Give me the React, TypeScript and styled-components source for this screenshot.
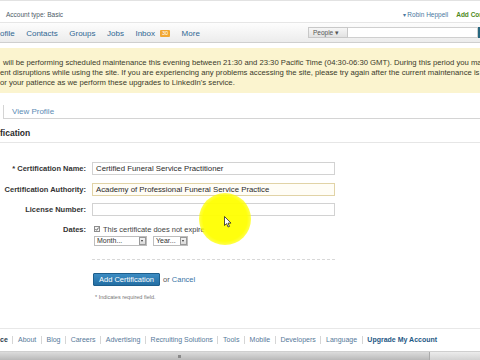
import React from 'react'
import styled, { createGlobalStyle, css } from 'styled-components'

const GlobalStyle = createGlobalStyle`
  html, body {
    margin: 0;
    padding: 0;
    background: #fff;
    overflow: hidden;
  }
  body {
    font-family: 'Liberation Sans', Arial, sans-serif;
    color: #333;
  }
`

const Page = styled.div`
  position: relative;
  width: 480px;
  height: 360px;
  overflow: hidden;
  display: flex;
  flex-direction: column;
  background: #fff;
`

// the browser window is scrolled a little, so both edges of the page are cut
const TopBar = styled.div`
  height: 22px;
  box-sizing: border-box;
  border-top: 1px solid #e2e2e2;
  display: flex;
  align-items: flex-end;
  padding: 0 0 4px 6px;
  margin-right: -30px;
  font-size: 6.5px;
  color: #4d5a66;
`

const Spacer = styled.div`
  flex: 1;
`

const UserName = styled.span`
  color: #4a78a0;
  margin-right: 8px;
  white-space: nowrap;
  &::before {
    content: '▾ ';
    font-size: 6px;
  }
`

const AddLink = styled.span`
  color: #4f8a1c;
  font-weight: bold;
  white-space: nowrap;
`

const NavBar = styled.div`
  height: 21px;
  box-sizing: border-box;
  display: flex;
  align-items: center;
  background: linear-gradient(#fdfdfd, #ececec);
  border-top: 1px solid #e6e6e6;
  border-bottom: 1px solid #cfcfcf;
`

const NavItems = styled.div`
  display: flex;
  align-items: center;
  gap: 11.5px;
  font-size: 8px;
  color: #2f6792;
  margin-top: 1px;
`

const Badge = styled.span`
  display: inline-block;
  background: #f2a831;
  color: #fff;
  font-size: 5.5px;
  line-height: 7px;
  padding: 0 2px;
  margin-left: 5px;
  border-radius: 1px;
  vertical-align: 1px;
`

const Search = styled.div`
  display: flex;
  align-items: stretch;
  height: 11px;
`

const SearchSelect = styled.div`
  width: 40px;
  box-sizing: border-box;
  border: 1px solid #c8c8c8;
  background: linear-gradient(#f6f6f6, #e2e2e2);
  font-size: 6.5px;
  color: #555;
  line-height: 9px;
  padding-left: 4px;
`

const SearchInput = styled.div`
  width: 130px;
  box-sizing: border-box;
  border: 1px solid #cfcfcf;
  border-left: none;
  background: #fff;
`

const SearchButton = styled.div`
  width: 2px;
  background: #27677f;
`

const Notice = styled.div`
  margin-top: 5px;
  height: 45px;
  box-sizing: border-box;
  background: #fbf4cf;
  padding-top: 10px;
  font-size: 7.7px;
  line-height: 10px;
  color: #3a3a2a;
  overflow: hidden;
`

const NoticeLine = styled.div<{ $indent?: number }>`
  white-space: nowrap;
  padding-left: ${p => p.$indent ?? 0}px;
`

const TabStrip = styled.div`
  margin-top: 12px;
  height: 14px;
  display: flex;
  align-items: stretch;
`

const ActiveTab = styled.div`
  width: 3px;
  border-right: 1px solid #d4d4d4;
`

const Tab = styled.div`
  flex: 1;
  border-bottom: 1px solid #d4d4d4;
  padding-left: 8px;
  font-size: 8px;
  color: #5c8cb5;
  line-height: 13px;
`

const SectionTitle = styled.div`
  height: 24px;
  box-sizing: border-box;
  border-bottom: 1px solid #e6e6e6;
  font-size: 8.5px;
  font-weight: bold;
  color: #2b2b2b;
  padding-top: 10px;
  line-height: 9px;
`

const Form = styled.div`
  margin-top: 19px;
  display: grid;
  grid-template-columns: 86px 243px;
  column-gap: 6px;
  row-gap: 7.5px;
  align-items: center;
`

const Label = styled.div<{ $top?: boolean }>`
  text-align: right;
  font-size: 7.5px;
  font-weight: bold;
  color: #333;
  white-space: nowrap;
  ${p =>
    p.$top &&
    css`
      align-self: start;
      margin-top: 1px;
    `}
`

const TextInput = styled.div<{ $focus?: boolean }>`
  height: 13px;
  box-sizing: border-box;
  border: 1px solid ${p => (p.$focus ? '#e1d3a6' : '#d2d2d2')};
  background: ${p => (p.$focus ? '#fffdf6' : '#fff')};
  font-size: 7.8px;
  line-height: 11px;
  padding-left: 3px;
  color: #2a2a2a;
  white-space: nowrap;
  overflow: hidden;
`

const Dates = styled.div`
  display: flex;
  flex-direction: column;
  gap: 2px;
  padding-left: 2px;
  margin-top: 1px;
`

const CheckRow = styled.div`
  display: flex;
  align-items: center;
  gap: 3px;
  font-size: 7.5px;
  color: #444;
  line-height: 9px;
`

const Selects = styled.div`
  display: flex;
  gap: 6px;
`

const Select = styled.div<{ $width: number }>`
  width: ${p => p.$width}px;
  height: 10px;
  box-sizing: border-box;
  border: 1px solid #bdbdbd;
  background: #fff;
  display: flex;
  align-items: center;
  justify-content: space-between;
  font-size: 7px;
  color: #333;
  padding-left: 2px;
`

const SelectArrow = styled.span`
  width: 7px;
  height: 8px;
  box-sizing: border-box;
  border: 1px solid #999;
  background: linear-gradient(#f4f4f4, #dadada);
  position: relative;
  &::after {
    content: '';
    position: absolute;
    left: 1px;
    top: 2.5px;
    border-left: 1.5px solid transparent;
    border-right: 1.5px solid transparent;
    border-top: 2px solid #333;
  }
`

const Divider = styled.div`
  margin: 13px 0 0 92px;
  width: 243px;
  border-top: 1px dashed #d8d8d8;
`

const Actions = styled.div`
  margin: 13px 0 0 93px;
  display: flex;
  align-items: center;
  gap: 3px;
  font-size: 7.5px;
  color: #555;
`

const PrimaryButton = styled.div`
  height: 13px;
  box-sizing: border-box;
  padding: 0 5px;
  background: linear-gradient(#3c8cc3, #236ea3);
  border: 1px solid #1d5e8c;
  color: #fff;
  font-size: 7.5px;
  line-height: 11px;
  border-radius: 1px;
`

const LinkText = styled.span`
  color: #3974a6;
`

const Required = styled.div`
  margin: 8px 0 0 95px;
  font-size: 5.5px;
  color: #777;
`

const Footer = styled.div`
  margin-top: auto;
  border-top: 1px solid #e8e8e8;
  height: 23px;
  box-sizing: border-box;
  padding-top: 7px;
  display: flex;
  align-items: flex-start;
  font-size: 7px;
  color: #56799a;
  white-space: nowrap;
`

const FooterLink = styled.span<{ $strong?: boolean; $dark?: boolean }>`
  ${p =>
    p.$strong &&
    css`
      font-weight: bold;
      color: ${p.$dark ? '#2c3c4c' : '#1f5985'};
    `}
`

const Sep = styled.span`
  width: 1px;
  height: 8px;
  background: #d6d6d6;
  margin: 0 4.6px;
`

const Scrollbar = styled.div`
  height: 8px;
  display: flex;
  background: linear-gradient(#ececec, #d2d2d2);
  border-top: 1px solid #cfcfcf;
`

const Thumb = styled.div`
  width: 430px;
  background: linear-gradient(#dcdcdc, #b9b9b9);
  display: flex;
  justify-content: center;
  align-items: center;
  padding-right: 70px;
  box-sizing: border-box;
  border-right: 1px solid #aaa;
`

const Grip = styled.span`
  width: 3px;
  height: 3px;
  background: #8a8a8a;
`

const Highlight = styled.div`
  position: absolute;
  left: 199px;
  top: 193px;
  width: 52px;
  height: 52px;
  border-radius: 50%;
  background: radial-gradient(circle, rgba(255, 255, 0, 0.95) 60%, rgba(255, 255, 0, 0.55) 78%, rgba(255, 255, 0, 0) 100%);
  pointer-events: none;
`

const Cursor = styled.svg`
  position: absolute;
  left: 224px;
  top: 216px;
`

const navItems = ['ofile', 'Contacts', 'Groups', 'Jobs']
const footerLinks = [
  'About',
  'Blog',
  'Careers',
  'Advertising',
  'Recruiting Solutions',
  'Tools',
  'Mobile',
  'Developers',
  'Language',
]

export default function App() {
  return (
    <Page>
      <GlobalStyle />
      <TopBar>
        <span>Account type: Basic</span>
        <Spacer />
        <UserName>Robin Heppell</UserName>
        <AddLink>Add Connections</AddLink>
      </TopBar>
      <NavBar>
        <NavItems>
          {navItems.map(item => (
            <span key={item}>{item}</span>
          ))}
          <span>
            Inbox<Badge>30</Badge>
          </span>
          <span>More</span>
        </NavItems>
        <Spacer />
        <Search>
          <SearchSelect>People ▾</SearchSelect>
          <SearchInput />
          <SearchButton />
        </Search>
      </NavBar>
      <Notice>
        <NoticeLine $indent={3}>
          will be performing scheduled maintenance this evening between 21:30 and 23:30 Pacific Time (04:30-06:30 GMT). During this period you may
        </NoticeLine>
        <NoticeLine>
          ent disruptions while using the site. If you are experiencing any problems accessing the site, please try again after the current maintenance is complete.
        </NoticeLine>
        <NoticeLine>or your patience as we perform these upgrades to LinkedIn&apos;s service.</NoticeLine>
      </Notice>
      <TabStrip>
        <ActiveTab />
        <Tab>View Profile</Tab>
      </TabStrip>
      <SectionTitle>fication</SectionTitle>
      <Form>
        <Label>* Certification Name:</Label>
        <TextInput>Certified Funeral Service Practitioner</TextInput>
        <Label>Certification Authority:</Label>
        <TextInput $focus>Academy of Professional Funeral Service Practice</TextInput>
        <Label>License Number:</Label>
        <TextInput />
        <Label $top>Dates:</Label>
        <Dates>
          <CheckRow>
            <svg width="6" height="6" viewBox="0 0 6 6">
              <rect x="0.5" y="0.5" width="5" height="5" fill="#f4f4f4" stroke="#8c8c8c" />
              <path d="M1.4 3 L2.6 4.3 L4.7 1.5" fill="none" stroke="#555" strokeWidth="0.9" />
            </svg>
            This certificate does not expire
          </CheckRow>
          <Selects>
            <Select $width={53}>
              Month...
              <SelectArrow />
            </Select>
            <Select $width={35}>
              Year...
              <SelectArrow />
            </Select>
          </Selects>
        </Dates>
      </Form>
      <Divider />
      <Actions>
        <PrimaryButton>Add Certification</PrimaryButton>
        <span>
          or <LinkText>Cancel</LinkText>
        </span>
      </Actions>
      <Required>* Indicates required field.</Required>
      <Footer>
        <FooterLink $strong $dark>
          ce
        </FooterLink>
        {footerLinks.map(link => (
          <React.Fragment key={link}>
            <Sep />
            <FooterLink>{link}</FooterLink>
          </React.Fragment>
        ))}
        <Sep />
        <FooterLink $strong>Upgrade My Account</FooterLink>
      </Footer>
      <Scrollbar>
        <Thumb>
          <Grip />
        </Thumb>
      </Scrollbar>
      <Highlight />
      <Cursor width="8" height="12" viewBox="0 0 8 12">
        <path d="M0.5 0.5 L0.5 9.5 L2.6 7.6 L4.1 11 L5.5 10.4 L4 7.1 L7 7.1 Z" fill="#fff" stroke="#222" strokeWidth="0.8" />
      </Cursor>
    </Page>
  )
}
